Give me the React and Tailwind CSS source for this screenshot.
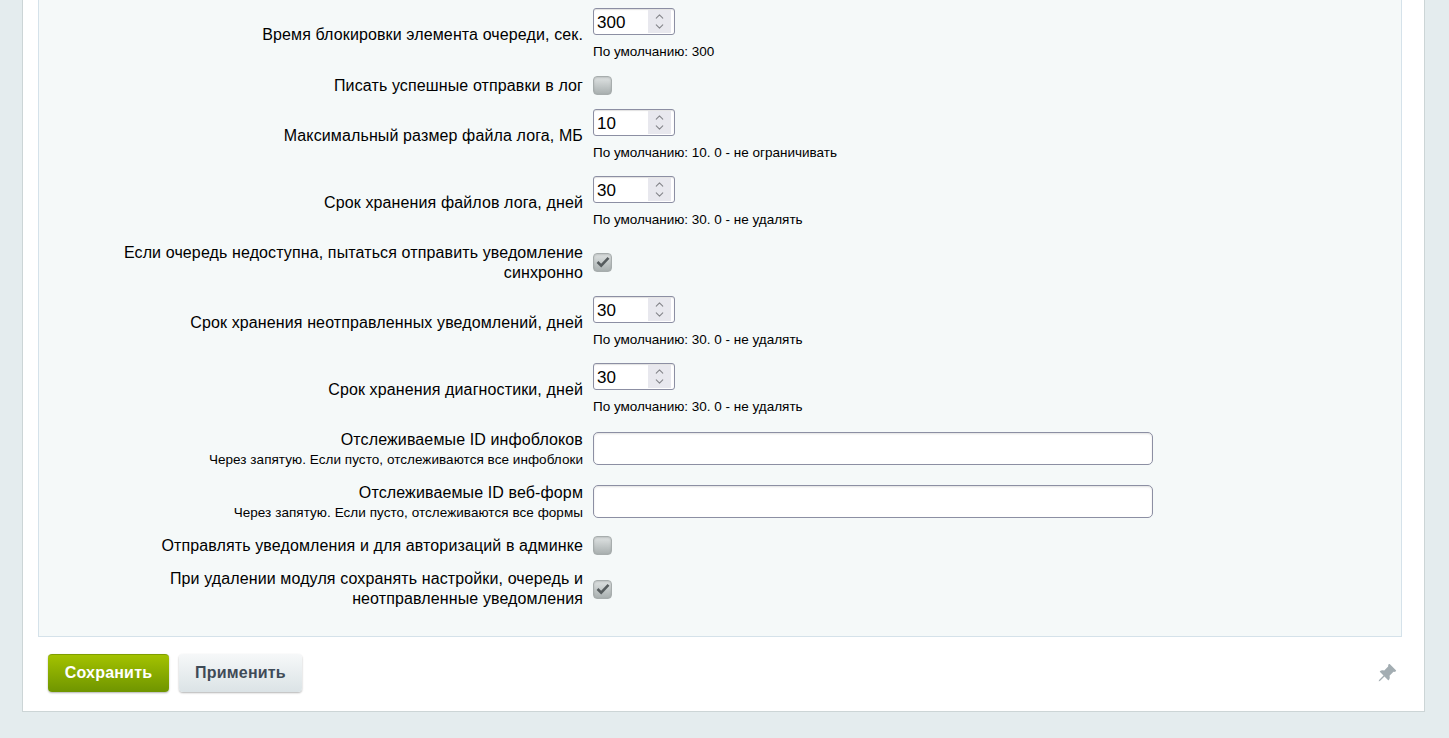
import React from 'react';
import { ChevronUp, ChevronDown } from 'lucide-react';
import { BsPinAngleFill } from 'react-icons/bs';

const NumberField = ({ value, hint }) => (
  <div className="flex flex-col items-start">
    <div className="flex items-center w-[82px] h-[27px] bg-white border border-[#8c8fa3] rounded-[3px] pl-[3px] pr-[3px] shadow-[inset_0_1px_1px_rgba(0,0,0,0.12)]">
      <input
        type="text"
        readOnly
        value={value}
        className="w-[50px] min-w-0 flex-1 pt-[3px] bg-transparent outline-none text-[17px] leading-none text-black"
      />
      <div className="flex flex-col items-center justify-center w-[23px] h-[23px] bg-[#e8e8ee] text-[#85868b]">
        <ChevronUp size={15} strokeWidth={2} className="-mb-[3px]" />
        <ChevronDown size={15} strokeWidth={2} />
      </div>
    </div>
    <div className="mt-[9px] text-[13.5px] leading-[16px] text-black">{hint}</div>
  </div>
);

const CheckBox = ({ checked }) => (
  <div className="flex items-center justify-center w-[19px] h-[19px] rounded-[4px] border border-[#a7adad] bg-linear-to-b from-[#dfe3e3] to-[#a9b0b0] shadow-[inset_0_1px_2px_rgba(0,0,0,0.15)]">
    {checked && (
      <svg width="14" height="12" viewBox="0 0 14 12" fill="none">
        <path d="M1.5 6 L5.2 9.6 L12.5 1.8" stroke="#565c5e" strokeWidth="2.6" />
      </svg>
    )}
  </div>
);

const Row = ({ label, note, height, gap, shift = 'pt-[2px]', children }) => (
  <div className={`flex items-center ${height} ${gap}`}>
    <div className={`w-[544px] shrink-0 text-right text-[16px] leading-[20px] tracking-[0.12px] text-black ${shift}`}>
      <div>{label}</div>
      {note && <div className="text-[13.5px] leading-[15px] tracking-[0.05px] mt-[2px]">{note}</div>}
    </div>
    <div className="ml-[10px]">{children}</div>
  </div>
);

const TextField = () => (
  <input
    type="text"
    readOnly
    className="block w-[560px] h-[33px] bg-white border border-[#8c8fa3] rounded-[5px] outline-none shadow-[inset_0_1px_2px_rgba(0,0,0,0.12)]"
  />
);

export default function App() {
  return (
    <div className="h-[738px] overflow-hidden bg-[#e4ecee] font-['Liberation_Sans',Arial,sans-serif]">
      <div className="ml-[22px] mr-[24px] h-[712px] bg-white border-x border-b border-[#ccd5d6] pl-[15px] pr-[22px] flex flex-col">
        <div className="h-[637px] shrink-0 bg-[#f5f9f9] border-x border-b border-[#d5e2ea] pt-[8px]">
          <Row label="Время блокировки элемента очереди, сек." height="h-[52px]" gap="mb-[16px]">
            <NumberField value="300" hint="По умолчанию: 300" />
          </Row>
          <Row label="Писать успешные отправки в лог" height="h-[18px]" gap="mb-[15px]">
            <CheckBox />
          </Row>
          <Row label="Максимальный размер файла лога, МБ" height="h-[52px]" gap="mb-[15px]">
            <NumberField value="10" hint="По умолчанию: 10. 0 - не ограничивать" />
          </Row>
          <Row label="Срок хранения файлов лога, дней" height="h-[52px]" gap="mb-[16px]">
            <NumberField value="30" hint="По умолчанию: 30. 0 - не удалять" />
          </Row>
          <Row
            label={<>Если очередь недоступна, пытаться отправить уведомление<br />синхронно</>}
            height="h-[36px]"
            gap="mb-[16px]"
          >
            <CheckBox checked />
          </Row>
          <Row label="Срок хранения неотправленных уведомлений, дней" height="h-[52px]" gap="mb-[15px]">
            <NumberField value="30" hint="По умолчанию: 30. 0 - не удалять" />
          </Row>
          <Row label="Срок хранения диагностики, дней" height="h-[52px]" gap="mb-[17px]">
            <NumberField value="30" hint="По умолчанию: 30. 0 - не удалять" />
          </Row>
          <Row
            label="Отслеживаемые ID инфоблоков"
            note="Через запятую. Если пусто, отслеживаются все инфоблоки"
            height="h-[33px]"
            gap="mb-[20px]"
            shift="pt-0"
          >
            <TextField />
          </Row>
          <Row
            label="Отслеживаемые ID веб-форм"
            note="Через запятую. Если пусто, отслеживаются все формы"
            height="h-[33px]"
            gap="mb-[18px]"
            shift="pt-0"
          >
            <TextField />
          </Row>
          <Row label="Отправлять уведомления и для авторизаций в админке" height="h-[18px]" gap="mb-[17px]">
            <CheckBox />
          </Row>
          <Row
            label={<>При удалении модуля сохранять настройки, очередь и<br />неотправленные уведомления</>}
            height="h-[36px]"
            gap="mb-0"
            shift="pt-0"
          >
            <CheckBox checked />
          </Row>
        </div>
        <div className="flex items-center pl-[10px] pr-[5px] pt-[17px]">
          <button className="w-[121px] h-[38px] pb-[1px] rounded-[4px] border-t border-[#7f9e00] bg-linear-to-b from-[#a3c200] to-[#6f9500] shadow-[0_1px_2px_rgba(0,0,0,0.3)] text-white font-bold text-[16px] tracking-[0.2px]">
            Сохранить
          </button>
          <button className="ml-[10px] w-[123px] h-[38px] rounded-[4px] bg-linear-to-b from-[#f6f8f9] to-[#dbe3e6] shadow-[0_1px_2px_rgba(0,0,0,0.3)] text-[#3f4b57] font-bold text-[16px] tracking-[0.2px]">
            Применить
          </button>
          <BsPinAngleFill size={20} className="ml-auto text-[#a3adb2]" />
        </div>
      </div>
    </div>
  );
}
